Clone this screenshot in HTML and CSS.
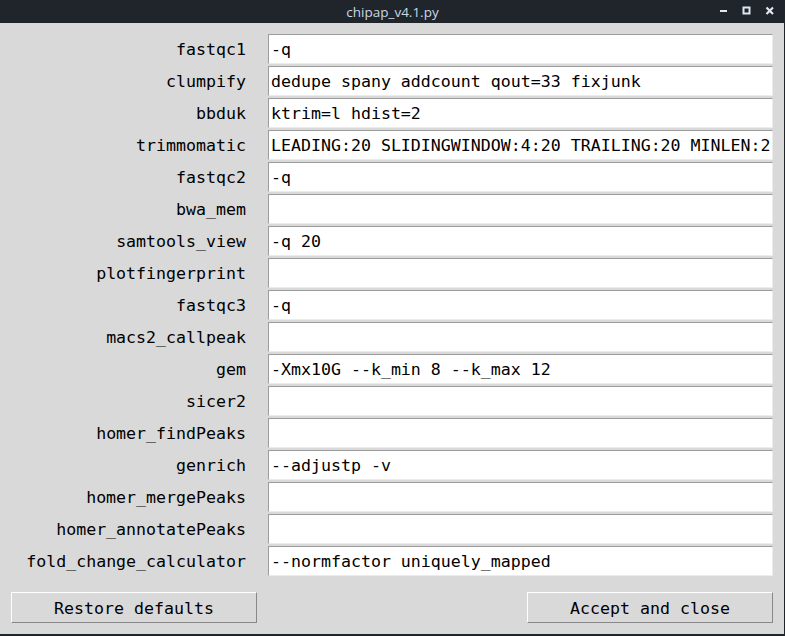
FILE: index.html
```html
<!DOCTYPE html>
<html>
<head>
<meta charset="utf-8">
<link rel="stylesheet" href="styles.css">
</head>
<body>
<div class="window">
  <div class="titlebar">
    <div class="title">chipap_v4.1.py</div>
    <div class="controls">
      <svg class="ctl" width="10" height="10" viewBox="0 0 10 10"><rect x="1" y="4" width="7" height="2" fill="#dfe7ef"/></svg>
      <svg class="ctl" width="10" height="10" viewBox="0 0 10 10"><rect x="1.5" y="1.5" width="6" height="6" fill="none" stroke="#dfe7ef" stroke-width="2"/></svg>
      <svg class="ctl" width="10" height="10" viewBox="0 0 10 10"><path d="M1.5 1.5 L8 8 M8 1.5 L1.5 8" stroke="#dfe7ef" stroke-width="2.2"/></svg>
    </div>
  </div>
  <div class="body">
    <div class="form">
      <div class="label">fastqc1</div><div class="entry">-q</div>
      <div class="label">clumpify</div><div class="entry">dedupe spany addcount qout=33 fixjunk</div>
      <div class="label">bbduk</div><div class="entry">ktrim=l hdist=2</div>
      <div class="label">trimmomatic</div><div class="entry">LEADING:20 SLIDINGWINDOW:4:20 TRAILING:20 MINLEN:2</div>
      <div class="label">fastqc2</div><div class="entry">-q</div>
      <div class="label">bwa_mem</div><div class="entry"></div>
      <div class="label">samtools_view</div><div class="entry">-q 20</div>
      <div class="label">plotfingerprint</div><div class="entry"></div>
      <div class="label">fastqc3</div><div class="entry">-q</div>
      <div class="label">macs2_callpeak</div><div class="entry"></div>
      <div class="label">gem</div><div class="entry">-Xmx10G --k_min 8 --k_max 12</div>
      <div class="label">sicer2</div><div class="entry"></div>
      <div class="label">homer_findPeaks</div><div class="entry"></div>
      <div class="label">genrich</div><div class="entry">--adjustp -v</div>
      <div class="label">homer_mergePeaks</div><div class="entry"></div>
      <div class="label">homer_annotatePeaks</div><div class="entry"></div>
      <div class="label">fold_change_calculator</div><div class="entry">--normfactor uniquely_mapped</div>
    </div>
    <div class="buttons">
      <div class="button">Restore defaults</div>
      <div class="button">Accept and close</div>
    </div>
  </div>
</div>
</body>
</html>
```

FILE: styles.css
```css
* { box-sizing: border-box; }
html, body {
  margin: 0;
  padding: 0;
  width: 785px;
  height: 636px;
  overflow: hidden;
  background: #d9d9d9;
}
.window {
  width: 785px;
  height: 636px;
  display: flex;
  flex-direction: column;
  border-right: 1px solid #1f252b;
  border-bottom: 2px solid #1f252b;
  background: #d9d9d9;
}
.titlebar {
  height: 23px;
  background: #1f252b;
  display: flex;
  align-items: center;
  justify-content: center;
  position: relative;
}
.title {
  font-family: "Open Sans", "DejaVu Sans", sans-serif;
  font-size: 13.5px;
  font-weight: 500;
  color: #cbd7e1;
  margin-left: 1px;
}
.controls {
  position: absolute;
  right: 9px;
  top: 6px;
  display: flex;
  gap: 13px;
}
.ctl { display: block; }
.body {
  flex: 1;
  padding: 11px 11px 0 11px;
  display: flex;
  flex-direction: column;
}
.form {
  display: grid;
  grid-template-columns: 235px 505px;
  column-gap: 22px;
  row-gap: 2px;
  font-family: "DejaVu Sans Mono", "Liberation Mono", monospace;
  font-size: 16.6px;
  color: #000;
}
.label {
  height: 30px;
  line-height: 30px;
  padding-top: 1px;
  text-align: right;
  white-space: nowrap;
}
.entry {
  height: 30px;
  line-height: 28px;
  padding-top: 1px;
  background: #fff;
  border-top: 1px solid #9c9c9c;
  border-left: 1px solid #9c9c9c;
  border-bottom: 1px solid #ececec;
  border-right: 1px solid #ececec;
  padding-left: 2px;
  white-space: nowrap;
  overflow: hidden;
}
.buttons {
  margin-top: 16px;
  display: flex;
  justify-content: space-between;
}
.button {
  width: 246px;
  height: 31px;
  line-height: 29px;
  padding-top: 1px;
  text-align: center;
  font-family: "DejaVu Sans Mono", "Liberation Mono", monospace;
  font-size: 16.6px;
  color: #000;
  border-top: 1px solid #ffffff;
  border-left: 1px solid #ffffff;
  border-bottom: 1px solid #888888;
  border-right: 1px solid #888888;
  background: #d9d9d9;
}
```
